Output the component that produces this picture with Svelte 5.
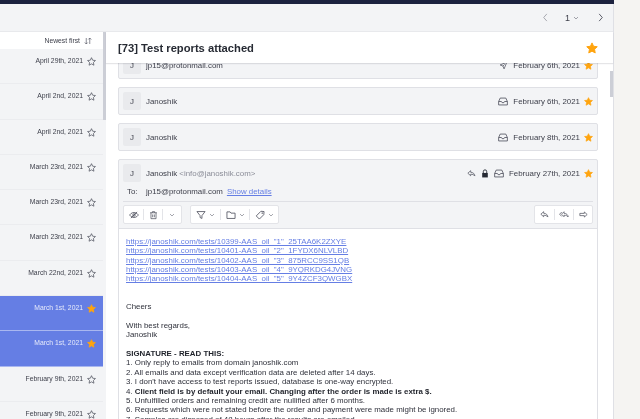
<script>
  const rows = [
    { date: "April 29th, 2021" },
    { date: "April 2nd, 2021" },
    { date: "April 2nd, 2021" },
    { date: "March 23rd, 2021" },
    { date: "March 23rd, 2021" },
    { date: "March 23rd, 2021" },
    { date: "March 22nd, 2021" },
    { date: "March 1st, 2021", selected: true },
    { date: "March 1st, 2021", selected: true },
    { date: "February 9th, 2021" },
    { date: "February 9th, 2021" },
  ];
  const links = [
    'https://janoshik.com/tests/10399-AAS_oil_"1"_25TAA6K2ZXYE',
    'https://janoshik.com/tests/10401-AAS_oil_"2"_1FYDX6NLVLBD',
    'https://janoshik.com/tests/10402-AAS_oil_"3"_875RCC9SS1QB',
    'https://janoshik.com/tests/10403-AAS_oil_"4"_9YQRKDG4JVNG',
    'https://janoshik.com/tests/10404-AAS_oil_"5"_9Y4ZCF3QWGBX',
  ];
  const starPath = "M8 1.2l2.1 4.5 4.9.6-3.6 3.4.9 4.9L8 12.2l-4.3 2.4.9-4.9L1 6.3l4.9-.6z";
</script>

{#snippet star(filled, size)}
  <svg class="star" class:filled width={size} height={size} viewBox="0 0 16 16"><path d={starPath} /></svg>
{/snippet}

{#snippet inbox()}
  <svg class="ico" width="10" height="9" viewBox="0 0 16 14"><path d="M1 7l2.500-5.500h9L15 7v5.500H1zM1 7h4.500l1 1.800h3l1-1.800H15" /></svg>
{/snippet}

{#snippet reply()}
  <svg class="ico" width="9" height="9" viewBox="0 0 16 16"><path d="M6.500 3L1.500 7.500l5 4.500V9.300c3.500 0 5.500.7 7.500 3.200 0-3.700-3-6.500-7.500-6.700z" /></svg>
{/snippet}

{#snippet replyAll()}
  <svg class="ico" width="10" height="9" viewBox="0 0 18 16"><path d="M5 3.500L1 7.500l4 4M9 3L4.500 7.500 9 12V9.300c3.500 0 5.500.7 7.500 3.200 0-3.700-3-6.500-7.500-6.700z" /></svg>
{/snippet}

{#snippet forward()}
  <svg class="ico" width="9" height="9" viewBox="0 0 16 16"><path d="M9.500 3.500L14.500 8l-5 4.500V10h-8V6h8z" /></svg>
{/snippet}

{#snippet chevron()}
  <svg class="ico chev" width="6" height="6" viewBox="0 0 12 12"><path d="M2 4l4 4 4-4" /></svg>
{/snippet}

<div class="app">
  <div class="topbar"></div>
  <div class="shell">
    <div class="window">
      <div class="toolbar">
        <svg class="pager off" width="7" height="9" viewBox="0 0 7 10"><path d="M5 1L1.500 5 5 9" /></svg>
        <span class="page">1</span>
        {@render chevron()}
        <svg class="pager next" width="7" height="9" viewBox="0 0 7 10"><path d="M2 1l3.500 4L2 9" /></svg>
      </div>
      <div class="panes">
        <aside class="list">
          <div class="sort">
            <span>Newest first</span>
            <svg class="ico" width="8" height="8" viewBox="0 0 16 16"><path d="M4.500 2v12M1.500 11l3 3 3-3M11.500 14V2M8.500 5l3-3 3 3" /></svg>
          </div>
          {#each rows as row}
            <div class="row" class:selected={row.selected}>
              <span>{row.date}</span>
              {@render star(row.selected, 9)}
            </div>
          {/each}
          <div class="thumb"></div>
        </aside>

        <main class="conversation">
          <header class="subject">
            <h1>[73] Test reports attached</h1>
            {@render star(true, 12)}
          </header>

          <div class="messages">
            <div class="card first">
              <div class="head">
                <span class="avatar">J</span>
                <span class="who">jp15@protonmail.com</span>
                <svg class="ico" width="9" height="9" viewBox="0 0 16 16"><path d="M14 2L2 7l5 2 2 5zM7 9l3-3" /></svg>
                <span class="when">February 6th, 2021</span>
                {@render star(true, 9)}
              </div>
            </div>
            <div class="card">
              <div class="head">
                <span class="avatar">J</span>
                <span class="who">Janoshik</span>
                {@render inbox()}
                <span class="when">February 6th, 2021</span>
                {@render star(true, 9)}
              </div>
            </div>
            <div class="card">
              <div class="head">
                <span class="avatar">J</span>
                <span class="who">Janoshik</span>
                {@render inbox()}
                <span class="when">February 8th, 2021</span>
                {@render star(true, 9)}
              </div>
            </div>

            <div class="card open">
              <div class="head">
                <span class="avatar">J</span>
                <span class="who"><b>Janoshik</b> <em>&lt;info@janoshik.com&gt;</em></span>
                {@render reply()}
                <svg class="lock" width="8" height="9" viewBox="0 0 14 16"><path d="M2 7h10v8H2z" /><path class="shackle" d="M4 7V4.500a3 3 0 0 1 6 0V7" /></svg>
                {@render inbox()}
                <span class="when">February 27th, 2021</span>
                {@render star(true, 9)}
              </div>
              <div class="to">
                <span class="to-label">To:</span>
                <span>jp15@protonmail.com</span>
                <a href="#details">Show details</a>
              </div>
              <div class="actions">
                <div class="group">
                  <span class="btn">
                    <svg class="ico" width="10" height="10" viewBox="0 0 16 16"><path d="M1 8s2.500-4 7-4 7 4 7 4-2.500 4-7 4-7-4-7-4zM3 13L13 3" /><circle cx="8" cy="8" r="2" /></svg>
                  </span>
                  <span class="btn">
                    <svg class="ico" width="9" height="10" viewBox="0 0 16 16"><path d="M2 4h12M6 4V2h4v2M3.500 4v10.500h9V4M6.500 7v5M9.500 7v5" /></svg>
                  </span>
                  <span class="btn">{@render chevron()}</span>
                </div>
                <div class="group">
                  <span class="btn wide">
                    <svg class="ico" width="10" height="10" viewBox="0 0 16 16"><path d="M1.500 2.500h13L9.500 9v4.500l-3-1.500V9z" /></svg>
                    {@render chevron()}
                  </span>
                  <span class="btn wide">
                    <svg class="ico" width="10" height="10" viewBox="0 0 16 16"><path d="M1.500 3h5l1.500 2h6.500v8.500h-13z" /></svg>
                    {@render chevron()}
                  </span>
                  <span class="btn wide">
                    <svg class="ico" width="10" height="10" viewBox="0 0 16 16"><path d="M9.500 2L14.500 2.500 14 7.500 7 14.500 2 9.500z" /><circle cx="11.500" cy="5" r=".6" /></svg>
                    {@render chevron()}
                  </span>
                </div>
                <div class="group end">
                  <span class="btn">{@render reply()}</span>
                  <span class="btn">{@render replyAll()}</span>
                  <span class="btn">{@render forward()}</span>
                </div>
              </div>
              <div class="body">
                <div class="links">
                  {#each links as link}
                    <a href="#link">{link}</a>
                  {/each}
                </div>
                <p class="cheers">Cheers</p>
                <p>With best regards,<br />Janoshik</p>
                <p>
                  <b>SIGNATURE - READ THIS:</b><br />
                  1. Only reply to emails from domain janoshik.com<br />
                  2. All emails and data except verification data are deleted after 14 days.<br />
                  3. I don't have access to test reports issued, database is one-way encrypted.<br />
                  4. <b>Client field is by default your email. Changing after the order is made is extra $.</b><br />
                  5. Unfulfilled orders and remaining credit are nullified after 6 months.<br />
                  6. Requests which were not stated before the order and payment were made might be ignored.<br />
                  7. Samples are disposed of 48 hours after the results are emailed.
                </p>
              </div>
            </div>
          </div>
          <div class="scroll-thumb"></div>
        </main>
      </div>
    </div>
    <div class="gutter"></div>
  </div>
</div>

<style>
  :global(body) {
    margin: 0;
    background: #f5f4f2;
  }
  .app {
    width: 640px;
    height: 419px;
    overflow: hidden;
    display: flex;
    flex-direction: column;
    font-family: "Liberation Sans", Arial, sans-serif;
    font-size: 7.900px;
    color: #3f414c;
    filter: blur(0.25px);
  }
  .topbar {
    height: 4px;
    background: #1c223f;
    flex: none;
    margin-right: 26px;
  }
  .shell {
    flex: 1;
    display: flex;
    min-height: 0;
  }
  .window {
    width: 613px;
    display: flex;
    flex-direction: column;
    border-right: 1px solid #dfe0e5;
    background: #f3f4f6;
  }
  .gutter {
    flex: 1;
    background: #f5f4f2;
  }
  .toolbar {
    height: 28px;
    flex: none;
    display: flex;
    align-items: center;
    justify-content: flex-end;
    padding-right: 9px;
    box-sizing: border-box;
    border-bottom: 1px solid #e8e9ec;
  }
  .pager {
    fill: none;
    stroke: #4d4f5c;
    stroke-width: 1;
  }
  .pager.off {
    opacity: 0.5;
    margin-right: 16px;
  }
  .pager.next {
    margin-left: 18px;
  }
  .page {
    font-size: 9px;
    margin-right: 3px;
  }
  .panes {
    flex: 1;
    display: flex;
    min-height: 0;
  }
  .list {
    width: 106px;
    flex: none;
    position: relative;
    overflow: hidden;
    font-size: 6.800px;
  }
  .sort {
    height: 17px;
    background: #fff;
    display: flex;
    align-items: center;
    justify-content: flex-end;
    gap: 4px;
    padding-right: 11px;
    box-sizing: border-box;
    margin-right: 3px;
  }
  .row {
    height: 35.300px;
    box-sizing: border-box;
    display: flex;
    justify-content: flex-end;
    align-items: flex-start;
    gap: 4px;
    padding: 7px 7px 0 0;
    margin-right: 3px;
    line-height: 10px;
    border-bottom: 1px solid #ebecef;
    background: #f3f4f6;
  }
  .row .star {
    margin-top: 1px;
  }
  .row.selected {
    background: #657ee4;
    color: #e6eafb;
    border-bottom: 1px solid #a9b7f0;
  }
  .thumb {
    position: absolute;
    top: 0;
    right: 0;
    width: 3px;
    height: 88px;
    background: #ccced6;
  }
  .star {
    flex: none;
    fill: none;
    stroke: #4d4f5c;
    stroke-width: 1.300;
  }
  .star.filled {
    fill: #ffa40e;
    stroke: #ffa40e;
  }
  .ico {
    flex: none;
    fill: none;
    stroke: #4d4f5c;
    stroke-width: 1.300;
  }
  .chev {
    stroke-width: 1;
  }
  .conversation {
    flex: 1;
    min-width: 0;
    position: relative;
    background: #fff;
    display: flex;
    flex-direction: column;
  }
  .subject {
    height: 31px;
    flex: none;
    box-sizing: border-box;
    display: flex;
    align-items: center;
    justify-content: space-between;
    padding: 0 15px 0 12px;
    background: #fff;
    position: relative;
    z-index: 2;
    box-shadow: 0 1px 1px rgba(40, 44, 60, 0.12);
  }
  h1 {
    margin: 0;
    font-size: 11.200px;
    font-weight: 700;
    color: #262a33;
  }
  .messages {
    flex: 1;
    min-height: 0;
    overflow: hidden;
    padding: 0 15px 0 12px;
    display: flex;
    flex-direction: column;
    gap: 8px;
  }
  .card {
    flex: none;
    background: #f3f4f6;
    border: 1px solid #dfe0e5;
    border-radius: 2px;
  }
  .card.first {
    margin-top: -12px;
  }
  .head {
    height: 26px;
    box-sizing: border-box;
    display: flex;
    align-items: center;
    gap: 4px;
    padding: 0 4px;
  }
  .avatar {
    width: 18px;
    height: 18px;
    flex: none;
    display: flex;
    align-items: center;
    justify-content: center;
    background: #e9eaed;
    border-radius: 2px;
    margin-right: 1px;
  }
  .who {
    flex: 1;
  }
  .who b {
    font-weight: 400;
    color: #3a3c47;
  }
  .who em {
    font-style: normal;
    color: #8b8d98;
  }
  .when {
    margin-left: 1px;
  }
  .lock {
    fill: #262a33;
    flex: none;
    margin: 0 1px;
  }
  .shackle {
    fill: none;
    stroke: #262a33;
    stroke-width: 1.600;
  }
  .to {
    display: flex;
    gap: 4px;
    padding: 1px 0 4px 8px;
    line-height: 10px;
  }
  .to-label {
    width: 11px;
    margin-right: 4px;
  }
  a {
    color: #657ee4;
    text-decoration: underline;
  }
  .actions {
    margin: 0 4px;
    border-top: 1px solid #dfe0e5;
    padding: 3px 0 4px;
    display: flex;
    gap: 8px;
  }
  .group {
    height: 19px;
    box-sizing: border-box;
    background: #fff;
    border: 1px solid #e3e4e8;
    border-radius: 2px;
    display: flex;
    align-items: center;
  }
  .group.end {
    margin-left: auto;
  }
  .btn {
    width: 19px;
    height: 11px;
    box-sizing: border-box;
    display: flex;
    align-items: center;
    justify-content: center;
    gap: 3px;
    border-left: 1px solid #e3e4e8;
  }
  .btn.wide {
    width: 29px;
  }
  .btn:first-child {
    border-left: 0;
  }
  .body {
    background: #fff;
    border-top: 1px solid #dfe0e5;
    padding: 8px 7px 0;
    line-height: 9.350px;
    color: #2f313b;
    height: 190px;
  }
  .links {
    display: flex;
    flex-direction: column;
    align-items: flex-start;
  }
  .body p {
    margin: 9.350px 0 0;
  }
  .body .cheers {
    margin-top: 18.700px;
  }
  .body b {
    color: #1f222a;
  }
  .scroll-thumb {
    position: absolute;
    top: 39px;
    right: 0;
    width: 3px;
    height: 26px;
    background: #ccced6;
    z-index: 3;
  }
</style>
